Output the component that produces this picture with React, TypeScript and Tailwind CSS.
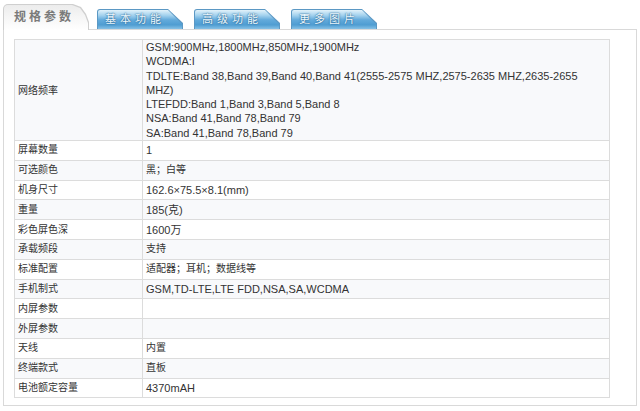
import React from "react";

// spec rows below the network block
const specRows: { label: string; value: string; cjk?: boolean }[] = [
  { label: "屏幕数量", value: "1" },
  { label: "可选颜色", value: "黑；白等", cjk: true },
  { label: "机身尺寸", value: "162.6×75.5×8.1(mm)" },
  { label: "重量", value: "185(克)" },
  { label: "彩色屏色深", value: "1600万" },
  { label: "承载频段", value: "支持", cjk: true },
  { label: "标准配置", value: "适配器；耳机；数据线等", cjk: true },
  { label: "手机制式", value: "GSM,TD-LTE,LTE FDD,NSA,SA,WCDMA" },
  { label: "内屏参数", value: "" },
  { label: "外屏参数", value: "" },
  { label: "天线", value: "内置", cjk: true },
  { label: "终端款式", value: "直板", cjk: true },
  { label: "电池额定容量", value: "4370mAH" },
];

const networkLines = [
  "GSM:900MHz,1800MHz,850MHz,1900MHz",
  "WCDMA:I",
  "TDLTE:Band 38,Band 39,Band 40,Band 41(2555-2575 MHZ,2575-2635 MHZ,2635-2655",
  "MHZ)",
  "LTEFDD:Band 1,Band 3,Band 5,Band 8",
  "NSA:Band 41,Band 78,Band 79",
  "SA:Band 41,Band 78,Band 79",
];

const BlueTab = ({ label }: { label: string }) => (
  <div className="h-[20px] w-[86px] rounded-tl-[3px] bg-[#5b98c4] px-px pt-px [clip-path:polygon(0_0,calc(100%-15px)_0,100%_14px,100%_100%,0_100%)]">
    <div className="flex h-full w-full items-center justify-center rounded-tl-[2px] bg-[linear-gradient(to_bottom,#e2f2fa_0%,#a4d2ee_28%,#63aadb_52%,#4f9dd2_78%,#86c1e6_100%)] pr-[10px] text-[11px] tracking-[4px] text-[#eef8fe] [clip-path:polygon(0_0,calc(100%-14px)_0,100%_14px,100%_100%,0_100%)] [text-shadow:0_0_1px_#2b6a96,0_0_2px_#2b6a96]">
      {label}
    </div>
  </div>
);

export default function App() {
  return (
    <div className="h-[411px] w-[640px] overflow-hidden bg-white font-['Liberation_Sans','Noto_Sans_CJK_SC',sans-serif] text-[#333]">
      {/* tabs */}
      <div className="relative z-10 flex h-[30px] items-end pl-[3px]">
        <div className="h-[26px] w-[86px] rounded-tl-[5px] bg-[#cfcfcf] px-px pt-px [clip-path:polygon(0_0,calc(100%-16px)_0,calc(100%-8px)_3px,calc(100%-3px)_10px,100%_18px,100%_100%,0_100%)]">
          <div className="flex h-full w-full items-center rounded-tl-[4px] bg-[linear-gradient(to_bottom,#ececec_0%,#f6f6f6_50%,#ffffff_100%)] pb-[2px] pl-[10px] text-[12px] font-bold tracking-[3px] text-[#7a7a7a] [clip-path:polygon(0_0,calc(100%-16px)_0,calc(100%-8px)_3px,calc(100%-3px)_10px,100%_18px,100%_100%,0_100%)]">
            规格参数
          </div>
        </div>
        <div className="ml-[8px] mb-px flex gap-[11px]">
          <BlueTab label="基本功能" />
          <BlueTab label="高级功能" />
          <BlueTab label="更多图片" />
        </div>
      </div>

      {/* panel */}
      <div className="-mt-px ml-[3px] h-[377px] w-[634px] border border-[#d9d9d9] pl-[10px] pt-[9px]">
        <table className="w-[596px] border-collapse text-[11px]">
          <tbody>
            <tr className="h-[101px] bg-[#f8f9fb]">
              <td className="w-[128px] border border-[#dcdcdc] pl-[3px] align-middle text-[10px]">
                网络频率
              </td>
              <td className="border border-[#dcdcdc] pl-[3px] align-top leading-[14.3px]">
                {networkLines.map((line) => (
                  <div key={line}>{line}</div>
                ))}
              </td>
            </tr>
            {specRows.map((row, i) => (
              <tr
                key={row.label}
                className={`h-[19.8px] ${i % 2 === 1 ? "bg-[#f8f9fb]" : "bg-white"}`}
              >
                <td className="border border-[#dcdcdc] py-0 pl-[3px] text-[10px] leading-[14px]">
                  {row.label}
                </td>
                <td
                  className={`border border-[#dcdcdc] py-0 pl-[3px] leading-[14px] ${row.cjk ? "text-[10px]" : ""}`}
                >
                  {row.value}
                </td>
              </tr>
            ))}
          </tbody>
        </table>
      </div>
    </div>
  );
}
